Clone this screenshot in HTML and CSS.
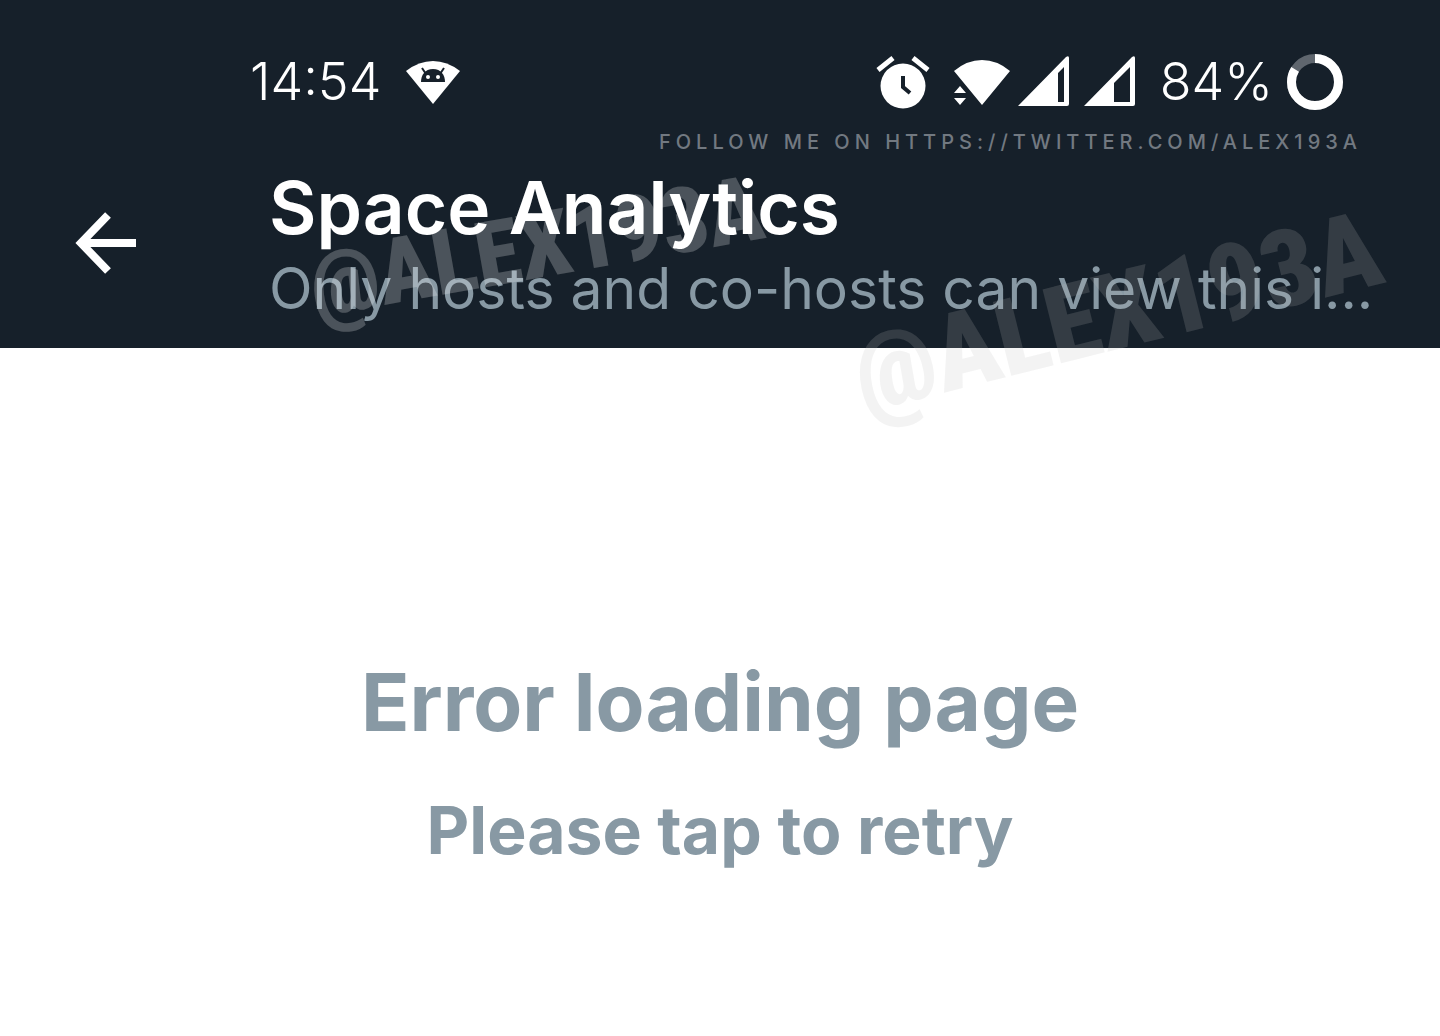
FILE: index.html
```html
<!DOCTYPE html>
<html lang="en">
<head>
<meta charset="utf-8">
<meta name="viewport" content="width=device-width, initial-scale=1">
<title>Space Analytics</title>
<link rel="stylesheet" href="styles.css">
</head>
<body>
<header class="header">
  <div class="status">
    <div class="status-left">
      <time class="clock">14:54</time>
      <svg class="debug" width="56" height="46" viewBox="0 0 56 46" aria-hidden="true">
        <path fill="#fff" d="M1 12Q14 2 28 2T55 12L28 45Z"/>
        <g fill="#16202a"><path d="M16 23c0-7 4-13 12-13s12 6 12 13Z"/><path d="M17 9l4 6M39 9l-4 6" stroke="#16202a" stroke-width="2"/></g>
        <circle cx="23" cy="18" r="2" fill="#fff"/><circle cx="33" cy="18" r="2" fill="#fff"/>
      </svg>
    </div>
    <div class="status-right">
      <svg width="54" height="54" viewBox="0 0 54 54" aria-hidden="true">
        <circle cx="27" cy="31" r="22.5" fill="#fff"/>
        <path d="M2 15L17 3M37 3l15 12" stroke="#fff" stroke-width="5"/>
        <path d="M27 21v11l7 6" fill="none" stroke="#16202a" stroke-width="4"/>
      </svg>
      <svg class="wifi" width="58" height="50" viewBox="0 0 58 50" aria-hidden="true">
        <path fill="#fff" d="M1 14Q14 3 29 3t28 11L29 48ZM1 36l6-7 6 7ZM1 41h12l-6 7Z"/>
      </svg>
      <svg class="signal" width="52" height="52" viewBox="0 0 52 52" aria-hidden="true">
        <path fill="#fff" fill-rule="evenodd" d="M0 50L48 1q3-2 3 1v46q0 2-2 2H1ZM40 46h6V11l-6 6Z"/>
      </svg>
      <svg width="52" height="52" viewBox="0 0 52 52" aria-hidden="true">
        <path fill="#fff" fill-rule="evenodd" d="M0 50L48 1q3-2 3 1v46q0 2-2 2H1ZM30 46h16V11L30 27Z"/>
      </svg>
      <span class="battery">84%</span>
      <svg width="56" height="56" viewBox="0 0 56 56" aria-hidden="true">
        <circle cx="28" cy="28" r="23.5" fill="none" stroke="#5f666e" stroke-width="9"/>
        <circle cx="28" cy="28" r="23.5" fill="none" stroke="#fff" stroke-width="9" pathLength="100" stroke-dasharray="84 16" transform="rotate(-90 28 28)"/>
      </svg>
    </div>
  </div>
  <p class="credit">FOLLOW ME ON HTTPS://TWITTER.COM/ALEX193A</p>
  <div class="toolbar">
    <button class="back" type="button" aria-label="Back">
      <svg width="62" height="62" viewBox="0 0 62 62" aria-hidden="true"><path d="M33 3L6 31l27 28M6 31h55" fill="none" stroke="#fff" stroke-width="8"/></svg>
    </button>
    <div class="titles">
      <h1 class="title">Space Analytics</h1>
      <p class="subtitle">Only hosts and co-hosts can view this i...</p>
    </div>
  </div>
  <span class="mark mark-small">@ALEX193A</span>
  <span class="mark mark-large">@ALEX193A</span>
</header>
<main class="content">
  <button class="retry" type="button">
    <span class="error">Error loading page</span>
    <span class="hint">Please tap to retry</span>
  </button>
</main>
</body>
</html>
```
FILE: styles.css
```css
* { box-sizing: border-box; }
body {
  margin: 0;
  min-height: 100vh;
  display: flex;
  flex-direction: column;
  background: #fff;
  font-family: Inter, "Liberation Sans", sans-serif;
}
h1, p { margin: 0; }
svg { display: block; flex: none; }
button { border: 0; padding: 0; background: none; font: inherit; cursor: pointer; }
.header {
  position: relative;
  padding: 52px 0 18px;
  background: #16202a;
  color: #fff;
}
.status {
  display: flex;
  justify-content: space-between;
  align-items: center;
  height: 60px;
  padding: 0 97px 0 250px;
}
.status-left, .status-right { display: flex; align-items: center; }
.clock, .battery { font-size: 52px; font-weight: 300; line-height: 60px; }
.debug { margin-left: 24px; }
.wifi { margin: 0 7px 0 23px; }
.signal { margin-right: 14px; }
.battery { margin: 0 14px 0 24px; }
.credit {
  padding-right: 78px;
  text-align: right;
  font-size: 20px;
  font-weight: 500;
  line-height: 60px;
  letter-spacing: 5px;
  color: #727981;
}
.toolbar { display: flex; padding: 0 56px 0 75px; }
.back { flex: none; align-self: flex-start; margin: 40px 132px 0 0; }
.titles { min-width: 0; }
.title { font-size: 73px; font-weight: 600; line-height: 72px; }
.subtitle {
  font-size: 57px;
  line-height: 82px;
  padding-top: 4px;
  color: #8899a4;
  white-space: nowrap;
  overflow: hidden;
  text-overflow: ellipsis;
}
.mark {
  position: absolute;
  font-family: "Roboto Condensed", "Liberation Sans", sans-serif;
  font-weight: 900;
  line-height: 1;
  white-space: nowrap;
  transform-origin: 0 100%;
  pointer-events: none;
}
.mark-small { left: 318px; top: 241px; font-size: 91px; color: rgba(255, 255, 255, .23); transform: rotate(-10deg); }
.mark-large { left: 868px; top: 322px; font-size: 107px; color: rgba(188, 188, 188, .18); transform: rotate(-14deg); }
.content { flex: 1; display: flex; justify-content: center; align-items: flex-start; padding-top: 300px; }
.retry { display: flex; flex-direction: column; align-items: center; gap: 20px; color: #8899a4; font-weight: 700; }
.error { font-size: 80px; line-height: 108px; }
.hint { font-size: 66px; line-height: 108px; }
```
